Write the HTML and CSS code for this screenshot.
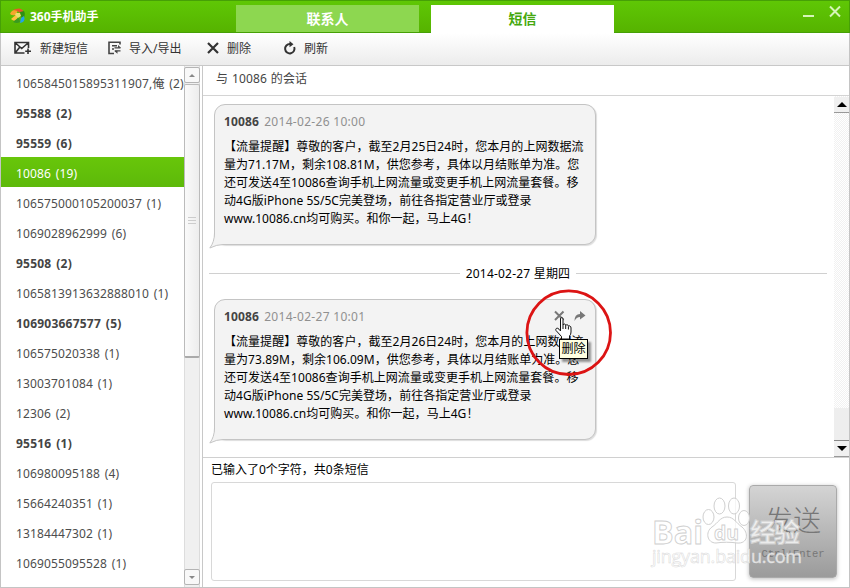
FILE: index.html
```html
<!DOCTYPE html>
<html lang="zh-CN">
  <head>
    <meta charset="UTF-8" />
    <meta name="viewport" content="width=device-width, initial-scale=1.0" />
    <title>360手机助手</title>
    <link rel="stylesheet" href="styles.css">
  </head>
  <body>
    <div class="window">
      <!-- Title bar -->
      <header class="titlebar">
        <div class="brand">
          <svg width="18" height="18" viewBox="0 0 18 18">
            <path d="M1 7Q3 2 9 3L7 8Q3 9 1 7Z" fill="#f6a62c" />
            <path d="M4 3Q12-1 15 5L11 6Q8 3 4 3Z" fill="#e7582b" />
            <path d="M15 4Q17 8 14 12L10 8L11 5Z" fill="#2f8f14" />
            <path d="M15 9Q17 15 11 16L12 11Z" fill="#23a3e8" />
            <path d="M2 12Q6 16 9 11L7 8Q4 10 2 12Z" fill="#ffc23d" />
            <path d="M4 15Q8 17 11 15L10 10Z" fill="#3a9a20" />
            <path d="M7 6L11 6L12 9L9 11L6 8Z" fill="#e8e070" />
          </svg>
          <span>360手机助手</span>
        </div>
        <nav class="tabs">
          <a class="tab">联系人</a>
          <a class="tab active">短信</a>
        </nav>
        <div class="win-buttons">
          <svg width="40" height="18" viewBox="0 0 40 18">
            <path d="M1 12H12" stroke="#d6f5b8" stroke-width="2" />
            <path d="M28 2.500L38 12.500M38 2.500L28 12.500" stroke="#d6f5b8" stroke-width="2" />
          </svg>
        </div>
      </header>

      <!-- Toolbar -->
      <div class="toolbar">
        <a class="tool new">
          <svg width="18" height="14" viewBox="0 0 18 14" fill="none" stroke="#333" stroke-width="1.600">
            <path d="M10.500 12H1V1.500H14.500V7M1.500 2L7.700 7.500L14 2M1.500 11.500L5.500 6.500M14 7.500V13M11.200 10.300H17" />
          </svg>
          <span>新建短信</span>
        </a>
        <a class="tool transfer">
          <svg width="14" height="14" viewBox="0 0 14 14" fill="none" stroke="#444" stroke-width="1.600">
            <path d="M12 3.500V1.200H1V12.500H6M4 4.700H9M4 8H6" />
            <path d="M6.500 6.800H12.500M12.500 9.800H7" stroke-width="1.300" />
            <path d="M10 4L13 6.800H10ZM9.500 9.800V12.800L6 9.800Z" fill="#444" stroke="none" />
          </svg>
          <span>导入/导出</span>
        </a>
        <a class="tool remove">
          <svg width="12" height="12" viewBox="0 0 12 12">
            <path d="M1 1L11 11M11 1L1 11" stroke="#333" stroke-width="2.200" />
          </svg>
          <span>删除</span>
        </a>
        <a class="tool refresh">
          <svg width="14" height="14" viewBox="0 0 14 14">
            <path d="M7 3A4.700 4.700 0 1 0 11.200 6" fill="none" stroke="#333" stroke-width="2" />
            <path d="M6.500 0L10.500 3.200L6.500 6.200Z" fill="#333" />
          </svg>
          <span>刷新</span>
        </a>
      </div>

      <div class="main">
        <!-- Conversation list -->
        <ul class="threads">
          <li>1065845015895311907,俺 (2)</li>
          <li class="unread">95588 (2)</li>
          <li class="unread">95559 (6)</li>
          <li class="selected">10086 (19)</li>
          <li>106575000105200037 (1)</li>
          <li>1069028962999 (6)</li>
          <li class="unread">95508 (2)</li>
          <li>1065813913632888010 (1)</li>
          <li class="unread">106903667577 (5)</li>
          <li>106575020338 (1)</li>
          <li>13003701084 (1)</li>
          <li>12306 (2)</li>
          <li class="unread">95516 (1)</li>
          <li>106980095188 (4)</li>
          <li>15664240351 (1)</li>
          <li>13184447302 (1)</li>
          <li>1069055095528 (1)</li>
        </ul>
        <div class="side-scroll">
          <div class="side-arrow"><i class="up"></i></div>
          <div class="side-thumb"><i></i><i></i><i></i></div>
          <div class="side-arrow bottom"><i class="down"></i></div>
        </div>

        <section class="content">
          <div class="chat-title">与 10086 的会话</div>
          <div class="chat">
            <div class="messages">
              <article class="bubble">
                <h3>10086 <time>2014-02-26 10:00</time></h3>
                <p>【流量提醒】尊敬的客户，截至2月25日24时，您本月的上网数据流<br>量为71.17M，剩余108.81M，供您参考，具体以月结账单为准。您<br>还可发送4至10086查询手机上网流量或变更手机上网流量套餐。移<br>动4G版iPhone 5S/5C完美登场，前往各指定营业厅或登录<br>www.10086.cn均可购买。和你一起，马上4G！</p>
                <svg class="tail" width="22" height="17" viewBox="0 0 22 17">
                  <path d="M6 0Q6 9 1 15Q8 12 12 12H22V0Z" fill="#f3f3f3" />
                  <path d="M5.500 0Q5.500 9 .8 15Q8 11.500 14 11.500H22" fill="none" stroke="#c4c4c4" />
                </svg>
              </article>
              <div class="day">2014-02-27 星期四</div>
              <article class="bubble">
                <h3>10086 <time>2014-02-27 10:01</time></h3>
                <p>【流量提醒】尊敬的客户，截至2月26日24时，您本月的上网数据流<br>量为73.89M，剩余106.09M，供您参考，具体以月结账单为准。您<br>还可发送4至10086查询手机上网流量或变更手机上网流量套餐。移<br>动4G版iPhone 5S/5C完美登场，前往各指定营业厅或登录<br>www.10086.cn均可购买。和你一起，马上4G！</p>
                <svg class="tail" width="22" height="17" viewBox="0 0 22 17">
                  <path d="M6 0Q6 9 1 15Q8 12 12 12H22V0Z" fill="#f3f3f3" />
                  <path d="M5.500 0Q5.500 9 .8 15Q8 11.500 14 11.500H22" fill="none" stroke="#c4c4c4" />
                </svg>
                <svg class="actions" width="34" height="12" viewBox="0 0 34 12">
                  <path d="M1 1.500L9.500 10M9.500 1.500L1 10" stroke="#777" stroke-width="2" />
                  <path d="M20.500 11Q20.500 4 26 4V1L31.500 5.500L26 9.500V7Q22.500 7 20.500 11Z" fill="#777" />
                </svg>
              </article>
            </div>
            <div class="chat-scroll">
              <div class="chat-arrow"><i class="up"></i></div>
              <div class="chat-thumb"></div>
              <div class="chat-arrow"><i class="down"></i></div>
            </div>
          </div>
          <div class="composer">
            <div class="composer-left">
              <div class="count">已输入了0个字符，共0条短信</div>
              <div class="input"></div>
            </div>
            <div class="send">
              <b>发送</b>
              <small>Ctrl+Enter</small>
            </div>
          </div>
        </section>
      </div>

      <!-- Highlight ring, tooltip and hand cursor -->
      <div class="tooltip">删除</div>
      <svg class="ring" width="90" height="90" viewBox="0 0 90 90">
        <circle cx="44.700" cy="44.700" r="41.800" fill="none" stroke="#dc1414" stroke-width="2.800" />
      </svg>
      <svg class="cursor" width="18" height="23" viewBox="0 0 18 23">
        <path d="M5.500 12V2Q5.500 .6 6.800 .6Q8 .6 8 2V8Q8.500 6.800 9.500 7Q10.600 7.100 10.700 8.500Q11.200 7.500 12.300 7.800Q13.300 8 13.400 9.200Q14 8.500 15 9Q16 9.500 16 11V15Q16 17.500 14.500 19V22H6.500V19.500L1 13.500Q.3 12 1.500 11.300Q2.700 10.800 4 12.200L5.500 14Z" fill="#fff" stroke="#111" />
        <path d="M8 8V12M10.700 8.500V12M13.400 9.500V12.500" stroke="#111" />
      </svg>

      <!-- Watermark -->
      <div class="watermark">
        <svg width="160" height="84" viewBox="0 0 160 84">
          <g fill="#fff" fill-opacity=".75" stroke="#cfcfcf" stroke-width="1">
            <ellipse cx="57.500" cy="42" rx="5.500" ry="7.500" />
            <ellipse cx="68.500" cy="31" rx="5.500" ry="8" />
            <ellipse cx="83" cy="31" rx="5.500" ry="8" />
            <ellipse cx="93" cy="43" rx="5.500" ry="7.500" />
            <path d="M76 42C69 42 67 48 61 52C54 57 56 68 65 68C71 67 80 67 86 68C97 69 98 58 91 52C85 48 83 42 76 42Z" />
          </g>
          <g class="mark-text">
            <text x="1" y="69" font-size="33" font-weight="bold" textLength="51" lengthAdjust="spacingAndGlyphs">Bai</text>
            <text x="63" y="65" font-size="20" font-weight="bold" textLength="25" lengthAdjust="spacingAndGlyphs">du</text>
            <text x="99" y="67" font-size="26" font-weight="bold" textLength="50">经验</text>
            <text class="url" x="1" y="88" font-size="18" textLength="150">jingyan.baidu.com</text>
          </g>
        </svg>
      </div>
    </div>
  </body>
</html>
```
FILE: styles.css
```css
* {
  box-sizing: border-box;
}

body {
  margin: 0;
  font-family: "Noto Sans", "Noto Sans CJK SC", sans-serif;
  font-size: 12px;
  color: #000;
}

ul,
h3,
p {
  margin: 0;
  padding: 0;
}

/* Window */
.window {
  position: relative;
  width: 850px;
  height: 588px;
  display: flex;
  flex-direction: column;
  overflow: hidden;
  background: #fff;
}

.window::after {
  content: "";
  position: absolute;
  inset: 33px 0 0 0;
  border: 1px solid #c4c4c4;
  border-top: none;
}

/* Title bar */
.titlebar {
  flex: none;
  height: 33px;
  display: flex;
  justify-content: space-between;
  background: linear-gradient(#5fc705, #56b300);
  border: 1px solid #46a006;
}

.brand {
  width: 235px;
  display: flex;
  gap: 3px;
  padding: 6px 0 0 8px;
  color: #fff;
  font-weight: bold;
  line-height: 19px;
}

.tabs {
  flex: 1;
  display: flex;
  gap: 12px;
  padding-top: 4px;
}

.tab {
  width: 183px;
  height: 27px;
  line-height: 28px;
  text-align: center;
  font-size: 14px;
  font-weight: bold;
  color: #fff;
  background: #8dd750;
}

.tab.active {
  height: 28px;
  color: #45a80d;
  background: #fff;
}

.win-buttons {
  width: 47px;
  padding-top: 3px;
}

/* Toolbar */
.toolbar {
  flex: none;
  height: 33px;
  display: flex;
  padding-left: 14px;
  background: linear-gradient(#fff, #ececec);
  border-bottom: 1px solid #c8c8c8;
  color: #333;
}

.tool {
  display: flex;
  align-items: center;
  height: 30px;
}

.new {
  gap: 8px;
  width: 94px;
}

.transfer {
  gap: 7px;
  width: 99px;
}

.remove {
  gap: 8px;
  width: 76px;
}

.refresh {
  gap: 7px;
}

/* Conversation list */
.main {
  flex: 1;
  min-height: 0;
  display: flex;
}

.threads {
  width: 184px;
  padding: 1px 0 0 1px;
  list-style: none;
  color: #4d4d4d;
  letter-spacing: 0.14px;
  word-spacing: 1.5px;
  white-space: nowrap;
}

.threads li {
  height: 30px;
  line-height: 33px;
  padding-left: 15px;
}

.threads .unread {
  font-weight: bold;
  letter-spacing: 0.22px;
  color: #444;
}

.threads .selected {
  color: #fff;
  background: linear-gradient(#68c60a, #5db90a);
}

/* Sidebar scrollbar */
.side-scroll {
  width: 16px;
  display: flex;
  flex-direction: column;
  padding: 1px 0 3px;
  background: #f0f0f0;
  border-left: 1px solid #ddd;
  border-right: 1px solid #ddd;
}

.side-arrow {
  height: 16px;
  margin: 0 -1px;
  display: flex;
  align-items: center;
  justify-content: center;
  border: 1px solid #b4b4b4;
  border-radius: 2px;
  background: #f8f8f8;
}

.side-arrow.bottom {
  margin-top: auto;
}

.up,
.down {
  border: 3px solid transparent;
}

.side-arrow .up {
  border-top: none;
  border-bottom-color: #888;
}

.side-arrow .down {
  border-bottom: none;
  border-top-color: #888;
}

.side-thumb {
  height: 274px;
  margin: 1px -1px 0;
  display: flex;
  flex-direction: column;
  align-items: center;
  justify-content: center;
  gap: 2px;
  border: 1px solid #bbb;
  border-bottom: 2px solid #aaa;
  border-radius: 2px;
  background: linear-gradient(90deg, #fafafa, #ededed);
}

.side-thumb i {
  width: 8px;
  height: 1px;
  background: #ccc;
}

/* Chat */
.content {
  flex: 1;
  margin-left: 2px;
  display: flex;
  flex-direction: column;
  border-left: 1px solid #c8c8c8;
}

.chat-title {
  height: 30px;
  padding-left: 13px;
  line-height: 26px;
  letter-spacing: 0.15px;
  word-spacing: 0.5px;
  color: #444;
  border-bottom: 1px solid #d4d4d4;
}

.chat {
  height: 361px;
  display: flex;
}

.messages {
  flex: 1;
  padding: 8px 0 0 6px;
}

.bubble {
  position: relative;
  width: 382px;
  height: 141px;
  margin-left: 5px;
  padding: 8px 0 0 9px;
  border: 1px solid #c4c4c4;
  border-radius: 11px;
  background: #f3f3f3;
  box-shadow: 1px 1px 1px #ddd;
}

.bubble h3 {
  font-size: 12px;
  line-height: 18px;
  letter-spacing: 0.12px;
  color: #444;
}

.bubble time {
  font-weight: normal;
  color: #909090;
  letter-spacing: 0.3px;
  margin-left: 2px;
}

.bubble p {
  margin-top: 7px;
  line-height: 18px;
  letter-spacing: 0.04px;
  white-space: nowrap;
}

.tail {
  position: absolute;
  left: -6px;
  bottom: -6px;
}

.actions {
  position: absolute;
  left: 339px;
  top: 10px;
}

.day {
  display: flex;
  align-items: center;
  gap: 6px;
  height: 54px;
  padding-top: 2px;
  margin-right: 7px;
  letter-spacing: 0.2px;
  white-space: nowrap;
}

.day::before,
.day::after {
  content: "";
  flex: 1;
  height: 1px;
  background: #d0d0d0;
}

.chat-scroll {
  width: 16px;
  padding-top: 1px;
  display: flex;
  flex-direction: column;
  background: repeating-conic-gradient(#f1f1f1 0 25%, #fff 0 50%) 0 0 / 2px 2px;
}

.chat-arrow {
  height: 16px;
  display: flex;
  align-items: center;
  justify-content: center;
  background: #f0f0f0;
  border-bottom: 1px solid #999;
}

.chat-arrow .up {
  border-width: 0 5px 5px;
  border-bottom-color: #000;
}

.chat-arrow .down {
  border-width: 5px 5px 0;
  border-top-color: #000;
}

.chat-thumb {
  height: 33px;
  margin-top: auto;
  background: #eee;
  border-bottom: 1px solid #888;
}

/* Composer */
.composer {
  flex: 1;
  display: flex;
  gap: 13px;
  padding-left: 8px;
  border-top: 1px solid #d0d0d0;
}

.composer-left {
  width: 525px;
}

.count {
  height: 24px;
  line-height: 24px;
}

.input {
  height: 99px;
  border: 1px solid #d8d8d8;
  border-radius: 3px;
}

.send {
  width: 88px;
  height: 93px;
  margin-top: 27px;
  padding-top: 14px;
  display: flex;
  flex-direction: column;
  align-items: center;
  border: 1px solid #aaa;
  border-radius: 4px;
  background: linear-gradient(#d4d4d4, #9b9b9b);
  box-shadow: 0 1px 4px #bbb;
  color: #777;
}

.send b {
  font-size: 28px;
  font-weight: 300;
  line-height: 40px;
}

.send small {
  font-family: "Liberation Mono", monospace;
  font-size: 10.5px;
  line-height: 28px;
}

/* Overlays */
.tooltip {
  position: absolute;
  left: 559px;
  top: 339px;
  width: 29px;
  height: 20px;
  line-height: 18px;
  text-align: center;
  background: #ffffe1;
  border: 1px solid #000;
  box-shadow: 3px 3px 2px rgba(0, 0, 0, 0.4);
}

.ring {
  position: absolute;
  left: 524px;
  top: 288px;
}

.cursor {
  position: absolute;
  left: 555px;
  top: 317px;
}

.watermark {
  position: absolute;
  left: 651px;
  top: 475px;
}

.watermark svg {
  display: block;
  overflow: visible;
}

.mark-text {
  font-family: "Open Sans", "Noto Sans CJK SC", sans-serif;
  fill: #fff;
  fill-opacity: 0.75;
  stroke: #cfcfcf;
  stroke-width: 0.9px;
}

.mark-text .url {
  stroke: #d8d8d8;
  stroke-width: 0.5px;
}
```
